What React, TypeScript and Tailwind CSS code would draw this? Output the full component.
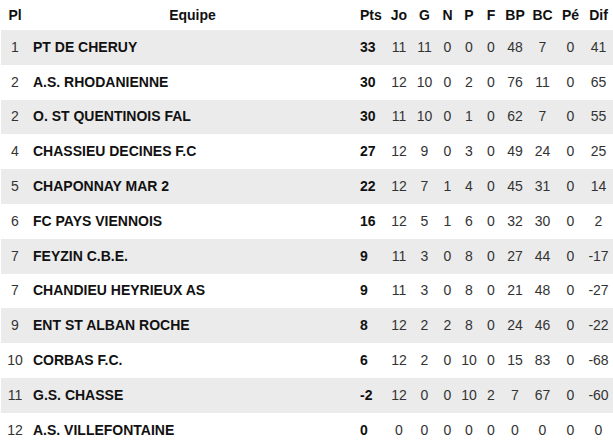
const rows: [string, string, number, number, number, number, number, number, number, number, number, number][] = [
  ['1', 'PT DE CHERUY', 33, 11, 11, 0, 0, 0, 48, 7, 0, 41],
  ['2', 'A.S. RHODANIENNE', 30, 12, 10, 0, 2, 0, 76, 11, 0, 65],
  ['2', 'O. ST QUENTINOIS FAL', 30, 11, 10, 0, 1, 0, 62, 7, 0, 55],
  ['4', 'CHASSIEU DECINES F.C', 27, 12, 9, 0, 3, 0, 49, 24, 0, 25],
  ['5', 'CHAPONNAY MAR 2', 22, 12, 7, 1, 4, 0, 45, 31, 0, 14],
  ['6', 'FC PAYS VIENNOIS', 16, 12, 5, 1, 6, 0, 32, 30, 0, 2],
  ['7', 'FEYZIN C.B.E.', 9, 11, 3, 0, 8, 0, 27, 44, 0, -17],
  ['7', 'CHANDIEU HEYRIEUX AS', 9, 11, 3, 0, 8, 0, 21, 48, 0, -27],
  ['9', 'ENT ST ALBAN ROCHE', 8, 12, 2, 2, 8, 0, 24, 46, 0, -22],
  ['10', 'CORBAS F.C.', 6, 12, 2, 0, 10, 0, 15, 83, 0, -68],
  ['11', 'G.S. CHASSE', -2, 12, 0, 0, 10, 2, 7, 67, 0, -60],
  ['12', 'A.S. VILLEFONTAINE', 0, 0, 0, 0, 0, 0, 0, 0, 0, 0],
]

const stats = ['Jo', 'G', 'N', 'P', 'F', 'BP', 'BC', 'Pé', 'Dif']

export default function App() {
  return (
    <div className="w-[613px] h-[448px] overflow-hidden bg-white pl-[1px]" style={{ fontFamily: '"Liberation Sans", Arial, sans-serif' }}>
      <table className="table-fixed w-[612px] border-collapse text-[14px]">
        <colgroup>
          <col className="w-[28px]" />
          <col className="w-[327px]" />
          <col className="w-[30px]" />
          <col className="w-[26px]" />
          <col className="w-[25px]" />
          <col className="w-[21px]" />
          <col className="w-[22px]" />
          <col className="w-[22px]" />
          <col className="w-[26px]" />
          <col className="w-[29px]" />
          <col className="w-[27px]" />
          <col className="w-[29px]" />
        </colgroup>
        <thead>
          <tr className="h-[30px] font-bold text-[#111]">
            <th className="text-center p-0">Pl</th>
            <th className="text-center p-0">Equipe</th>
            <th className="text-left pl-[4px]">Pts</th>
            {stats.map((s) => (
              <th key={s} className="text-center p-0 whitespace-nowrap">{s}</th>
            ))}
          </tr>
        </thead>
        <tbody>
          {rows.map((r, i) => (
            <tr key={i} className={i % 2 === 0 ? 'h-[34.8px] bg-[#ebebeb]' : 'h-[34.8px] bg-white'}>
              <td className="text-center p-0 text-[#333]">{r[0]}</td>
              <td className="pl-[4px] font-bold text-[#111] whitespace-nowrap">{r[1]}</td>
              <td className="pl-[4px] font-bold text-[#111]">{r[2]}</td>
              {r.slice(3).map((v, j) => (
                <td key={j} className="text-center p-0 text-[#333]">{v}</td>
              ))}
            </tr>
          ))}
        </tbody>
      </table>
    </div>
  )
}
